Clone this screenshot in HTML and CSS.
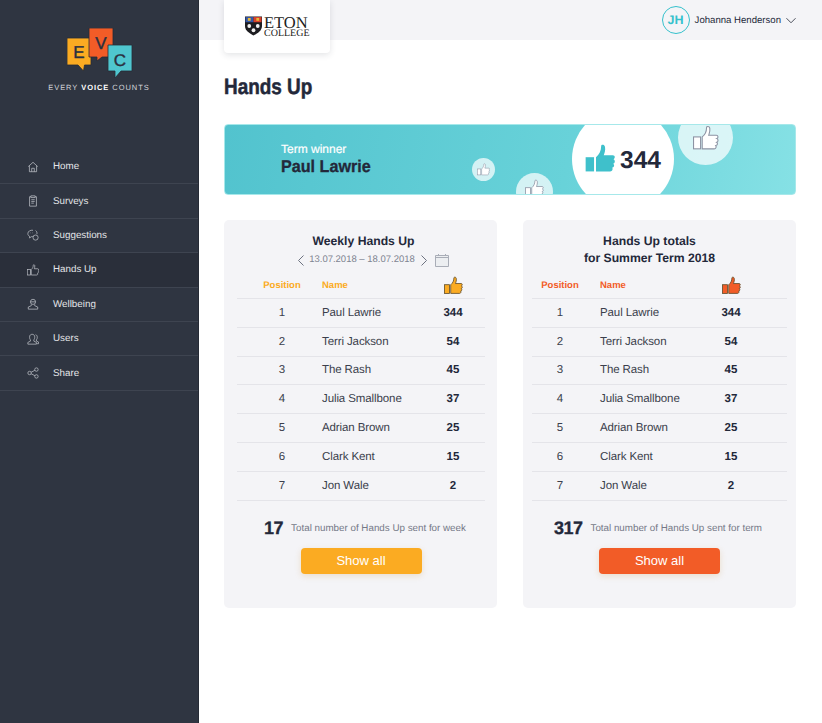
FILE: index.html
```html
<!DOCTYPE html>
<html lang="en">
<head>
  <meta charset="UTF-8" />
  <title>Hands Up</title>
  <link rel="stylesheet" href="styles.css">
</head>
<body>
  <svg class="defs" width="0" height="0">
    <symbol id="thumb" viewBox="0 0 24 24">
      <rect x="0.500" y="11" width="6.500" height="11" />
      <path d="M8.5 11C11 9 12.5 6 12.5 2.5C12.5 1 15 1 15.5 3C16 5.5 15 8 14.5 9.5H21.5C23.5 9.5 23.5 12 22 12.5C23.5 13 23.5 15.5 21.8 16C23 16.7 22.8 18.8 21 19C21.8 20 21.3 22 19.5 22H8.5Z" />
    </symbol>
  </svg>

  <div class="page">
    <aside class="sidebar">
      <div class="logo">
        <svg class="logo-mark" width="66" height="51" viewBox="0 0 66 51">
          <path class="bubble-e" d="M0 10H24V37H17.500L16.500 43L11 37H0Z" />
          <path class="bubble-v" d="M22 0H46V29H35L30 33L30 29H22Z" />
          <path class="bubble-c" d="M41 17H65V43H54L48 50L48 43H41Z" />
          <text x="12" y="30" class="logo-letter">E</text>
          <text x="34" y="21" class="logo-letter">V</text>
          <text x="53" y="38" class="logo-letter">C</text>
        </svg>
        <div class="logo-text">EVERY <b>VOICE</b> COUNTS</div>
      </div>
      <nav class="menu">
        <a class="menu-item">
          <svg viewBox="0 0 14 14"><path d="M1.500 6.500L7 1.500L12.500 6.500M2.800 5.500V12.500H11.200V5.500M5.500 12.500V8.500H8.500V12.500" /></svg>
          Home
        </a>
        <a class="menu-item">
          <svg viewBox="0 0 14 14"><path d="M4.500 2H3V13H11V2H9.500M4.500 1H9.500V3H4.500ZM5 5.500H9M5 7.500H9M5 9.500H8" /></svg>
          Surveys
        </a>
        <a class="menu-item">
          <svg viewBox="0 0 14 14"><path d="M7 1.500C4 1 1 2.500 1 5.500C1 7 1.800 8 3 8.500V10.500L5 9C6 9 7 8.800 7.500 8.500M10 1.800C11.500 2.800 12 4.500 11.500 6M4 4.500H4.500M6.500 4.500H7" /><circle cx="10" cy="10" r="3" /></svg>
          Suggestions
        </a>
        <a class="menu-item active">
          <svg viewBox="0 0 24 24"><use href="#thumb" /></svg>
          Hands Up
        </a>
        <a class="menu-item">
          <svg viewBox="0 0 14 14"><circle cx="7" cy="4.500" r="3" /><path d="M5 7.500V9L1.500 10.500V13H12.500V10.500L9 9V7.500M4 4.500H10" /></svg>
          Wellbeing
        </a>
        <a class="menu-item">
          <svg viewBox="0 0 14 14"><path d="M1 13V11L4 9.500V8C3 7 3 5.500 3 4.500C3 2.500 4.500 1.500 6 1.500C7.500 1.500 9 2.500 9 4.500C9 5.500 9 7 8 8V9.500L11 11V13ZM10 2C11.500 2.500 12 3.500 12 5C12 6 11.800 7 11 8V9.500L13.500 10.500V12.500H11.500" /></svg>
          Users
        </a>
        <a class="menu-item">
          <svg viewBox="0 0 14 14"><circle cx="3" cy="7" r="2" /><circle cx="11" cy="3" r="2" /><circle cx="11" cy="11" r="2" /><path d="M4.800 6.100L9.200 3.900M4.800 7.900L9.200 10.100" /></svg>
          Share
        </a>
      </nav>
    </aside>

    <div class="main">
      <header class="topbar">
        <div class="school-card">
          <svg class="crest" width="17" height="20" viewBox="0 0 18 20">
            <path d="M0 0H18V10C18 15 13 18 9 20C5 18 0 15 0 10Z" fill="#1c1c20" />
            <rect x="0.500" y="0.500" width="8.500" height="5.500" fill="#3558a8" />
            <rect x="9" y="0.500" width="8.500" height="5.500" fill="#d8402c" />
            <rect x="3" y="1.500" width="3" height="3" fill="#e8b93a" />
            <rect x="12" y="1.500" width="3" height="3" fill="#e8b93a" />
            <circle cx="4.500" cy="10" r="2" fill="#f2f2f2" />
            <circle cx="13.500" cy="10" r="2" fill="#f2f2f2" />
            <circle cx="9" cy="14.500" r="2" fill="#f2f2f2" />
          </svg>
          <div class="school-name">
            <div class="school-top">ETON</div>
            <div class="school-bottom">COLLEGE</div>
          </div>
        </div>
        <div class="user">
          <span class="avatar">JH</span>
          <span class="user-name">Johanna Henderson</span>
          <svg class="user-arrow" width="10" height="7" viewBox="0 0 11 7"><path d="M0.500 1L5.500 6L10.500 1" /></svg>
        </div>
      </header>

      <div class="content">
        <h1>Hands Up</h1>

        <section class="banner">
          <div class="banner-label">Term winner</div>
          <div class="banner-name">Paul Lawrie</div>
          <span class="bubble bubble-sm"><svg><use href="#thumb" /></svg></span>
          <span class="bubble bubble-md"><svg><use href="#thumb" /></svg></span>
          <span class="bubble bubble-lg"><svg><use href="#thumb" /></svg></span>
          <div class="banner-score">
            <svg class="banner-thumb"><use href="#thumb" /></svg>
            344
          </div>
        </section>

        <div class="cards">
          <section class="card card-week">
            <div class="card-head">
              <h3>Weekly Hands Up</h3>
              <div class="dates">
                <svg class="date-arrow" width="6" height="11" viewBox="0 0 6 11"><path d="M5.500 0.500L0.500 5.500L5.500 10.500" /></svg>
                <span>13.07.2018 – 18.07.2018</span>
                <svg class="date-arrow" width="6" height="11" viewBox="0 0 6 11"><path d="M0.500 0.500L5.500 5.500L0.500 10.500" /></svg>
                <svg class="calendar" width="14" height="13" viewBox="0 0 14 13"><path d="M0.500 1.500H13.500V12.500H0.500ZM0.500 3.500H13.500M3.500 0V1.500M10.500 0V1.500" /></svg>
              </div>
            </div>
            <div class="row row-head">
              <div class="pos">Position</div>
              <div class="name">Name</div>
              <div class="val"><svg class="head-thumb"><use href="#thumb" /></svg></div>
            </div>
            <div class="row"><div class="pos">1</div><div class="name">Paul Lawrie</div><div class="val">344</div></div>
            <div class="row"><div class="pos">2</div><div class="name">Terri Jackson</div><div class="val">54</div></div>
            <div class="row"><div class="pos">3</div><div class="name">The Rash</div><div class="val">45</div></div>
            <div class="row"><div class="pos">4</div><div class="name">Julia Smallbone</div><div class="val">37</div></div>
            <div class="row"><div class="pos">5</div><div class="name">Adrian Brown</div><div class="val">25</div></div>
            <div class="row"><div class="pos">6</div><div class="name">Clark Kent</div><div class="val">15</div></div>
            <div class="row"><div class="pos">7</div><div class="name">Jon Wale</div><div class="val">2</div></div>
            <div class="total"><b>17</b><span>Total number of Hands Up sent for week</span></div>
            <button class="show-all">Show all</button>
          </section>

          <section class="card card-term">
            <div class="card-head">
              <h3>Hands Up totals<br>for Summer Term 2018</h3>
            </div>
            <div class="row row-head">
              <div class="pos">Position</div>
              <div class="name">Name</div>
              <div class="val"><svg class="head-thumb"><use href="#thumb" /></svg></div>
            </div>
            <div class="row"><div class="pos">1</div><div class="name">Paul Lawrie</div><div class="val">344</div></div>
            <div class="row"><div class="pos">2</div><div class="name">Terri Jackson</div><div class="val">54</div></div>
            <div class="row"><div class="pos">3</div><div class="name">The Rash</div><div class="val">45</div></div>
            <div class="row"><div class="pos">4</div><div class="name">Julia Smallbone</div><div class="val">37</div></div>
            <div class="row"><div class="pos">5</div><div class="name">Adrian Brown</div><div class="val">25</div></div>
            <div class="row"><div class="pos">6</div><div class="name">Clark Kent</div><div class="val">15</div></div>
            <div class="row"><div class="pos">7</div><div class="name">Jon Wale</div><div class="val">2</div></div>
            <div class="total"><b>317</b><span>Total number of Hands Up sent for term</span></div>
            <button class="show-all">Show all</button>
          </section>
        </div>
      </div>
    </div>
  </div>
</body>
</html>
```

FILE: styles.css
```css
* {
  box-sizing: border-box;
}
html, body {
  margin: 0;
  height: 100%;
}
body {
  font-family: "Liberation Sans", Arial, sans-serif;
  background-color: #fff;
  color: #23283a;
  overflow: hidden;
  text-rendering: geometricPrecision;
}
.defs {
  position: absolute;
}
.page {
  display: flex;
  height: 723px;
}

/* sidebar */
.sidebar {
  width: 199px;
  flex: none;
  background-color: #2f3541;
  border-right: 1px solid #262b35;
}
.logo {
  height: 150px;
  padding-top: 28px;
  display: flex;
  flex-direction: column;
  align-items: center;
}
.logo-mark {
  display: block;
  margin-left: 2px;
}
.logo-mark path {
  stroke: #262b35;
  stroke-width: 0.800;
}
.bubble-e { fill: #fbab22; }
.bubble-v { fill: #f25c27; }
.bubble-c { fill: #4fc6cf; }
.logo-letter {
  font-size: 17px;
  fill: #2b3040;
  stroke: #2b3040;
  stroke-width: 0.400;
  text-anchor: middle;
}
.logo-text {
  margin-top: 4px;
  font-size: 7.500px;
  letter-spacing: 0.950px;
  line-height: 10px;
  color: #d4d6db;
  white-space: nowrap;
}
.logo-text b {
  color: #fff;
}
.menu-item {
  display: flex;
  align-items: center;
  gap: 14px;
  height: 34.400px;
  padding-left: 27px;
  font-size: 9.800px;
  color: #e4e5e8;
  border-bottom: 1px solid #3e4450;
}
.menu-item svg {
  width: 12px;
  height: 14px;
  fill: none;
  stroke: #b9bcc3;
  stroke-width: 0.900;
}
.menu-item.active {
  background-color: #2a2f3a;
}
.menu-item.active svg {
  stroke-width: 1.500;
}

/* top bar */
.main {
  flex: 1;
  min-width: 0;
}
.topbar {
  height: 40px;
  background-color: #f4f4f7;
  display: flex;
  justify-content: space-between;
  padding: 0 26px 0 25px;
}
.school-card {
  width: 106px;
  height: 53px;
  background-color: #fff;
  border-radius: 0 0 4px 4px;
  box-shadow: 0 2px 6px rgba(40, 45, 60, 0.13);
  display: flex;
  align-items: flex-start;
  gap: 2px;
  padding: 16px 0 0 21px;
  position: relative;
}
.school-name {
  font-family: "Liberation Serif", "Times New Roman", serif;
  color: #1c1c20;
}
.school-top {
  font-size: 16.500px;
  line-height: 13px;
}
.school-bottom {
  margin-top: 1px;
  font-size: 10px;
  line-height: 8px;
}
.user {
  display: flex;
  align-items: center;
  height: 40px;
}
.avatar {
  width: 28px;
  height: 28px;
  border: 1.500px solid #35c1cc;
  border-radius: 50%;
  color: #35c1cc;
  font-size: 12.500px;
  font-weight: bold;
  display: flex;
  align-items: center;
  justify-content: center;
}
.user-name {
  margin-left: 5px;
  font-size: 9.600px;
  color: #23283a;
}
.user-arrow {
  margin-left: 5px;
  fill: none;
  stroke: #3a3f4c;
}

/* content */
.content {
  padding: 0 26px 0 25px;
}
h1 {
  margin: 0;
  padding-top: 33px;
  height: 84px;
  font-size: 22px;
  line-height: 28px;
  font-weight: bold;
  color: #23283a;
  -webkit-text-stroke: 0.500px #23283a;
  transform: scaleX(0.86);
  transform-origin: left;
}
.banner {
  position: relative;
  height: 71px;
  overflow: hidden;
  border: 1px solid #a6e8ea;
  border-radius: 4px;
  background: linear-gradient(100deg, #52c3ce 0%, #68d2d9 60%, #86e1e5 100%);
  padding: 17px 0 0 56px;
}
.banner-label {
  font-size: 12px;
  line-height: 14px;
  color: #fff;
  -webkit-text-stroke: 0.200px #fff;
}
.banner-name {
  margin-top: 1px;
  font-size: 17px;
  line-height: 20px;
  font-weight: bold;
  color: #23283a;
  -webkit-text-stroke: 0.300px #23283a;
  transform: scaleX(0.95);
  transform-origin: left;
}
.bubble {
  position: absolute;
  border-radius: 50%;
  background-color: rgba(255, 255, 255, 0.72);
  display: flex;
  align-items: center;
  justify-content: center;
}
.bubble svg {
  fill: #fff;
  stroke: #8d93a3;
  stroke-width: 1;
}
.bubble-sm {
  left: 247px;
  top: 33px;
  width: 23px;
  height: 23px;
}
.bubble-sm svg {
  width: 13px;
  height: 13px;
}
.bubble-md {
  left: 291px;
  top: 48px;
  width: 37px;
  height: 37px;
  align-items: flex-start;
  padding-top: 6px;
}
.bubble-md svg {
  width: 19px;
  height: 19px;
}
.bubble-lg {
  left: 453px;
  top: -15px;
  width: 55px;
  height: 55px;
}
.bubble-lg svg {
  width: 26px;
  height: 26px;
}
.banner-score {
  position: absolute;
  left: 347px;
  top: -17px;
  width: 102px;
  height: 102px;
  padding-top: 4px;
  border-radius: 50%;
  background-color: #fff;
  display: flex;
  align-items: center;
  justify-content: center;
  gap: 4px;
  font-size: 24.500px;
  font-weight: bold;
  color: #23283a;
}
.banner-thumb {
  width: 31px;
  height: 31px;
  fill: #3fc0cb;
  margin-top: -6px;
}

/* cards */
.cards {
  display: flex;
  justify-content: space-between;
  margin-top: 25px;
}
.card {
  width: 273px;
  height: 388px;
  background-color: #f4f4f7;
  border-radius: 5px;
  display: flex;
  flex-direction: column;
  align-items: center;
  padding-top: 13px;
}
.card-week {
  --accent: #fbab22;
  --pos-width: 85px;
  --pos-left: 5px;
  --pos-right: 0px;
  --val-width: 64px;
  --side: 13px;
  --side-right: 12px;
}
.card-term {
  --accent: #f25c27;
  --pos-width: 68px;
  --pos-left: 0px;
  --pos-right: 12px;
  --val-width: 112px;
  --side: 9px;
  --side-right: 9px;
}
.card-head {
  height: 40px;
  text-align: center;
  width: 100%;
}
.card-week .card-head h3 {
  padding-left: 6px;
}
.card-term .card-head h3 {
  padding-right: 20px;
}
h3 {
  margin: 0;
  font-size: 12.200px;
  line-height: 17px;
  font-weight: bold;
  color: #23283a;
}
.dates {
  display: flex;
  align-items: center;
  justify-content: center;
  margin-top: 3px;
  font-size: 9.500px;
  line-height: 14px;
  color: #7f8492;
  padding-left: 26px;
}
.dates span {
  margin: 0 6px 0 5px;
  white-space: nowrap;
}
.date-arrow {
  fill: none;
  stroke: #6d7280;
}
.calendar {
  margin-left: 8px;
  fill: #eceef1;
  stroke: #a9adb7;
}
.row {
  display: flex;
  align-items: center;
  align-self: stretch;
  flex: none;
  height: 28.800px;
  margin: 0 var(--side-right) 0 var(--side);
  font-size: 11.500px;
  letter-spacing: -0.100px;
  color: #3b3f4c;
  border-bottom: 1px solid #e4e4e9;
}
.row-head {
  height: 26px;
  font-size: 9.500px;
  letter-spacing: 0;
  font-weight: bold;
  color: var(--accent);
}
.pos {
  flex: none;
  width: var(--pos-width);
  padding-left: var(--pos-left);
  padding-right: var(--pos-right);
  text-align: center;
}
.name {
  flex: 1;
  min-width: 0;
  white-space: nowrap;
}
.val {
  flex: none;
  width: var(--val-width);
  text-align: center;
  font-weight: bold;
  font-size: 11.500px;
  letter-spacing: 0;
  color: #23283a;
}
.head-thumb {
  display: block;
  margin: 0 auto;
  width: 19px;
  height: 19px;
  fill: var(--accent);
  stroke: #5c4a28;
  stroke-width: 1;
}
.total {
  display: flex;
  align-items: center;
  gap: 8px;
  margin-top: 17px;
  height: 22px;
  font-size: 9.800px;
  color: #747987;
}
.card-week .total {
  padding-left: 9px;
}
.card-term .total {
  padding-right: 3px;
}
.total b {
  font-size: 18px;
  letter-spacing: -0.500px;
  -webkit-text-stroke: 0.300px #23283a;
  color: #23283a;
}
.show-all {
  margin-top: 8px;
  width: 121px;
  height: 26px;
  border: none;
  border-radius: 4px;
  background-color: var(--accent);
  box-shadow: 0 2px 6px rgba(200, 140, 50, 0.22);
  color: #fff;
  font-family: inherit;
  font-size: 13px;
  cursor: pointer;
}
.card-week .show-all {
  margin-left: 1px;
}
```
